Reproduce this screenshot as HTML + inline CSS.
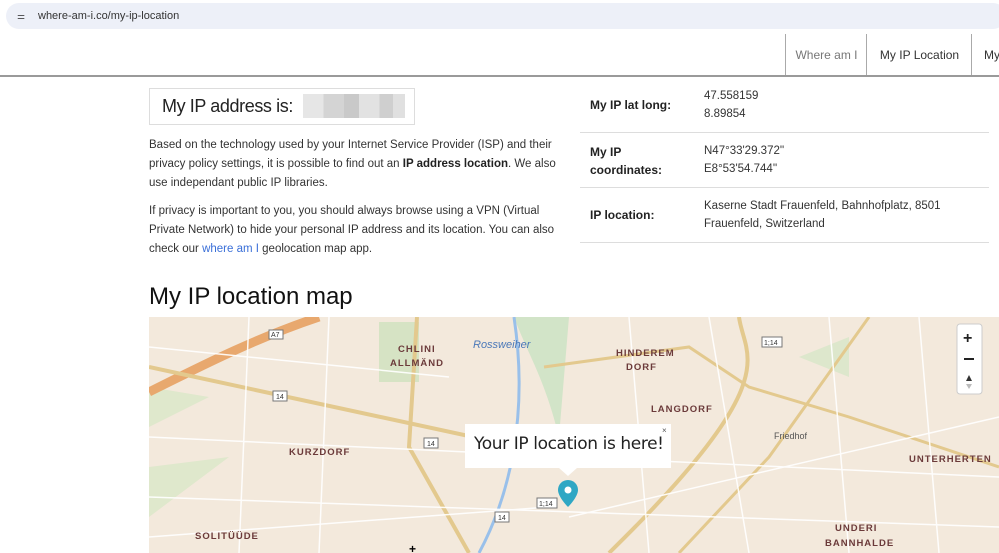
<!DOCTYPE html><html><head><style>
body{margin:0;width:999px;height:553px;overflow:hidden;background:#fff;font-family:"Liberation Sans",sans-serif;color:#222;position:relative}
.abs{position:absolute}
.bar{left:6px;top:3px;width:1000px;height:26px;background:#edf0f8;border-radius:13px}
.url{left:38px;top:10px;font-size:11px;color:#333}
.nav{top:34px;left:0;width:999px;height:41px;border-bottom:2px solid #9a9a9a}
.ni{top:34px;height:41px;line-height:42px;font-size:12px;border-left:1px solid #aaa;text-align:center}
p{margin:0}
.txt{font-size:11.5px;line-height:19px;color:#333}
.row{left:580px;width:409px;border-bottom:1px solid #ddd}
.lab{position:absolute;left:10px;font-size:12px;font-weight:bold}
.val{position:absolute;left:124px;font-size:11.5px;line-height:18px;color:#333}
</style></head><body>
<div class="abs bar"></div>
<div class="abs" style="left:17px;top:11px;width:10px;height:10px;font-size:9px;color:#444">⚌</div>
<div class="abs url">where-am-i.co/my-ip-location</div>
<div class="abs nav"></div>
<div class="abs ni" style="left:785px;width:81px;color:#777">Where am I</div>
<div class="abs ni" style="left:866px;width:105px;color:#333">My IP Location</div>
<div class="abs ni" style="left:971px;width:40px;color:#333">My</div>

<div class="abs" style="left:149px;top:88px;width:264px;height:35px;border:1px solid #ddd"></div>
<div class="abs" style="left:303px;top:94px;width:102px;height:24px;background:linear-gradient(90deg,#e6e6e6 0 20%,#d4d4d4 20% 40%,#c9c9c9 40% 55%,#e2e2e2 55% 75%,#cfcfcf 75% 88%,#e0e0e0 88%)"></div>
<div class="abs" style="left:162px;top:96px;font-size:18px;letter-spacing:-0.4px">My IP address is:</div>

<div class="abs txt" style="left:149px;top:136px;width:410px">Based on the technology used by your Internet Service Provider (ISP) and their privacy policy settings, it is possible to find out an <b style="color:#222">IP address location</b>. We also use independant public IP libraries.</div>
<div class="abs txt" style="left:149px;top:202px;width:410px">If privacy is important to you, you should always browse using a VPN (Virtual Private Network) to hide your personal IP address and its location. You can also check our <span style="color:#3a6fd8">where am I</span> geolocation map app.</div>

<div class="abs row" style="top:86px;height:46px"><div class="lab" style="top:12px">My IP lat long:</div><div class="val" style="top:1px">47.558159<br>8.89854</div></div>
<div class="abs row" style="top:133px;height:54px"><div class="lab" style="top:10px;line-height:18px">My IP<br>coordinates:</div><div class="val" style="top:9px">N47°33'29.372''<br>E8°53'54.744''</div></div>
<div class="abs row" style="top:188px;height:54px"><div class="lab" style="top:20px">IP location:</div><div class="val" style="top:9px">Kaserne Stadt Frauenfeld, Bahnhofplatz, 8501<br>Frauenfeld, Switzerland</div></div>

<div class="abs" style="left:149px;top:283px;font-size:24px;color:#111">My IP location map</div>

<svg class="abs" style="left:149px;top:317px" width="850" height="236">
<rect width="850" height="236" fill="#f3e9dc"/>
<path d="M0 110 L60 80 L0 70Z M0 150 L80 140 L0 200Z" fill="#dfe8cc"/>
<rect x="230" y="5" width="40" height="60" fill="#d6e3c4"/>
<path d="M365 0 C380 40 395 60 410 120 L420 0Z" fill="#d2e4c8"/>
<path d="M650 40 L700 20 L700 60 Z" fill="#dde7cc"/>
<path d="M0 75 C60 45 110 20 170 0" stroke="#e8a86e" stroke-width="9" fill="none"/>
<path d="M0 50 L380 132 L470 140" stroke="#e3c98e" stroke-width="4" fill="none"/>
<path d="M268 0 L260 130 L320 236" stroke="#e3c98e" stroke-width="4" fill="none"/>
<path d="M330 236 C360 180 380 100 365 0" stroke="#99c0ea" stroke-width="3" fill="none"/>
<path d="M590 0 C595 40 640 60 460 236" stroke="#e3c98e" stroke-width="4" fill="none"/>
<path d="M720 0 L620 140 L530 236" stroke="#e3c98e" stroke-width="3" fill="none"/>
<path d="M395 50 L540 30 L600 70 L700 100 L850 150" stroke="#e3c98e" stroke-width="3" fill="none"/>
<g stroke="#fff" stroke-width="1.5" fill="none" opacity=".9">
<path d="M0 120 L850 160 M0 180 L850 210 M100 0 L90 236 M180 0 L170 236 M480 0 L500 236 M560 0 L600 236 M680 0 L700 236 M770 0 L790 236 M0 30 L300 60 M420 200 L850 100 M0 220 L400 190"/></g>
<g font-family="Liberation Sans" font-size="9.5" fill="#6b3a3a" font-weight="bold" letter-spacing="1">
<text x="249" y="35">CHLINI</text><text x="241" y="49">ALLMÄND</text>
<text x="467" y="39">HINDEREM</text><text x="477" y="53">DORF</text>
<text x="502" y="95">LANGDORF</text><text x="140" y="138">KURZDORF</text>
<text x="760" y="145">UNTERHERTEN</text><text x="46" y="222">SOLITÜÜDE</text>
<text x="686" y="214">UNDERI</text><text x="676" y="229">BANNHALDE</text></g>
<text x="324" y="31" font-family="Liberation Sans" font-size="11" font-style="italic" fill="#4a78b8">Rossweiher</text>
<text x="625" y="122" font-family="Liberation Sans" font-size="9" fill="#555">Friedhof</text>
<g font-family="Liberation Sans" font-size="7" fill="#333"><rect x="120" y="13" width="14" height="9" fill="#fff" stroke="#777"/><text x="122" y="20">A7</text>
<rect x="124" y="74" width="14" height="10" fill="#fff" stroke="#777"/><text x="127" y="82">14</text>
<rect x="275" y="121" width="14" height="10" fill="#fff" stroke="#777"/><text x="278" y="129">14</text>
<rect x="346" y="195" width="14" height="10" fill="#fff" stroke="#777"/><text x="349" y="203">14</text>
<rect x="388" y="181" width="20" height="10" fill="#fff" stroke="#777"/><text x="390" y="189">1;14</text>
<rect x="613" y="20" width="20" height="10" fill="#fff" stroke="#777"/><text x="615" y="28">1;14</text></g>
<path d="M419 163 a10 10 0 0 1 10 10 c0 7 -10 17 -10 17 s-10 -10 -10 -17 a10 10 0 0 1 10 -10z" fill="#2fa7c4"/><circle cx="419" cy="173" r="3.5" fill="#fff"/>
<rect x="316" y="107" width="206" height="44" fill="#fff"/>
<path d="M410 151 l9 8 l9 -8z" fill="#fff"/>
<text x="325" y="132" font-family="DejaVu Sans" font-size="17" fill="#222" textLength="190">Your IP location is here!</text>
<text x="513" y="116" font-size="8" fill="#555" font-family="Liberation Sans">×</text>
<rect x="808" y="7" width="25" height="70" rx="3" fill="#fff" stroke="#ccc"/>
<text x="814" y="26" font-size="16" font-weight="bold" fill="#222" font-family="Liberation Sans">+</text>
<rect x="815" y="41" width="10" height="2" fill="#222"/>
<path d="M820 58 l3 6 h-6z" fill="#333"/><path d="M820 72 l3 -5 h-6z" fill="#bbb"/>
<text x="260" y="236" font-size="12" font-weight="bold">+</text>
</svg>
</body></html>
